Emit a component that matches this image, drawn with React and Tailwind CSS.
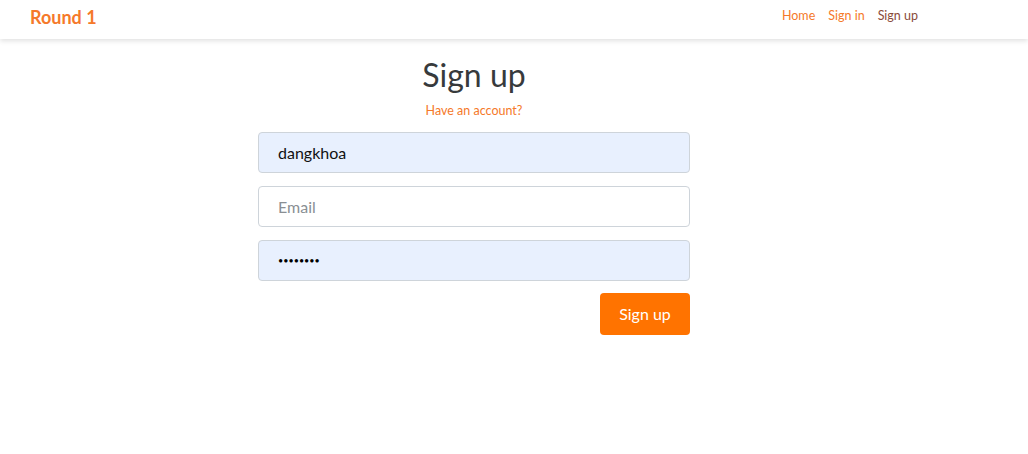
export default function App() {
  const font = { fontFamily: '"Source Sans Pro", Lato, "Noto Sans", sans-serif' };
  return (
    <div className="min-h-[454px] w-[1028px] bg-white" style={font}>
      <nav className="relative z-10 flex h-[39px] items-center justify-between bg-white pb-[6px] pl-[30px] pr-[110px] shadow-[0_2px_5px_rgba(0,0,0,0.12)]">
        <a className="text-[18px] font-bold leading-none text-[#f5792a]">Round 1</a>
        <div className="flex items-center gap-[13px] text-[12.5px] leading-none">
          <a className="text-[#f5792a]">Home</a>
          <a className="text-[#f5792a]">Sign in</a>
          <a className="text-[#8a4b3a]">Sign up</a>
        </div>
      </nav>
      <main className="ml-[258px] flex w-[432px] flex-col pt-[16px]">
        <h1 className="text-center text-[32px] leading-[40px] text-[#373a3c]">Sign up</h1>
        <p className="mt-[8px] text-center text-[12.5px] leading-[16px] text-[#f5792a]">Have an account?</p>
        <form className="mt-[13px] flex flex-col gap-[13px]">
          <input
            className="h-[41px] rounded-[4px] border border-[#ced4da] bg-[#e8f0fe] px-[19px] text-[16px] text-[#111] outline-none"
            defaultValue="dangkhoa"
            readOnly
          />
          <input
            className="h-[41px] rounded-[4px] border border-[#ced4da] bg-white px-[19px] text-[16px] text-[#111] outline-none placeholder:text-[#8a8f94]"
            placeholder="Email"
            readOnly
          />
          <input
            type="password"
            className="h-[41px] rounded-[4px] border border-[#ced4da] bg-[#e8f0fe] px-[19px] text-[9px] text-black outline-none"
            defaultValue="password"
            readOnly
          />
        </form>
        <div className="mt-[12px] flex justify-end">
          <button className="h-[42px] w-[90px] rounded-[4px] bg-[#ff7300] text-[16px] text-white">Sign up</button>
        </div>
      </main>
    </div>
  );
}
